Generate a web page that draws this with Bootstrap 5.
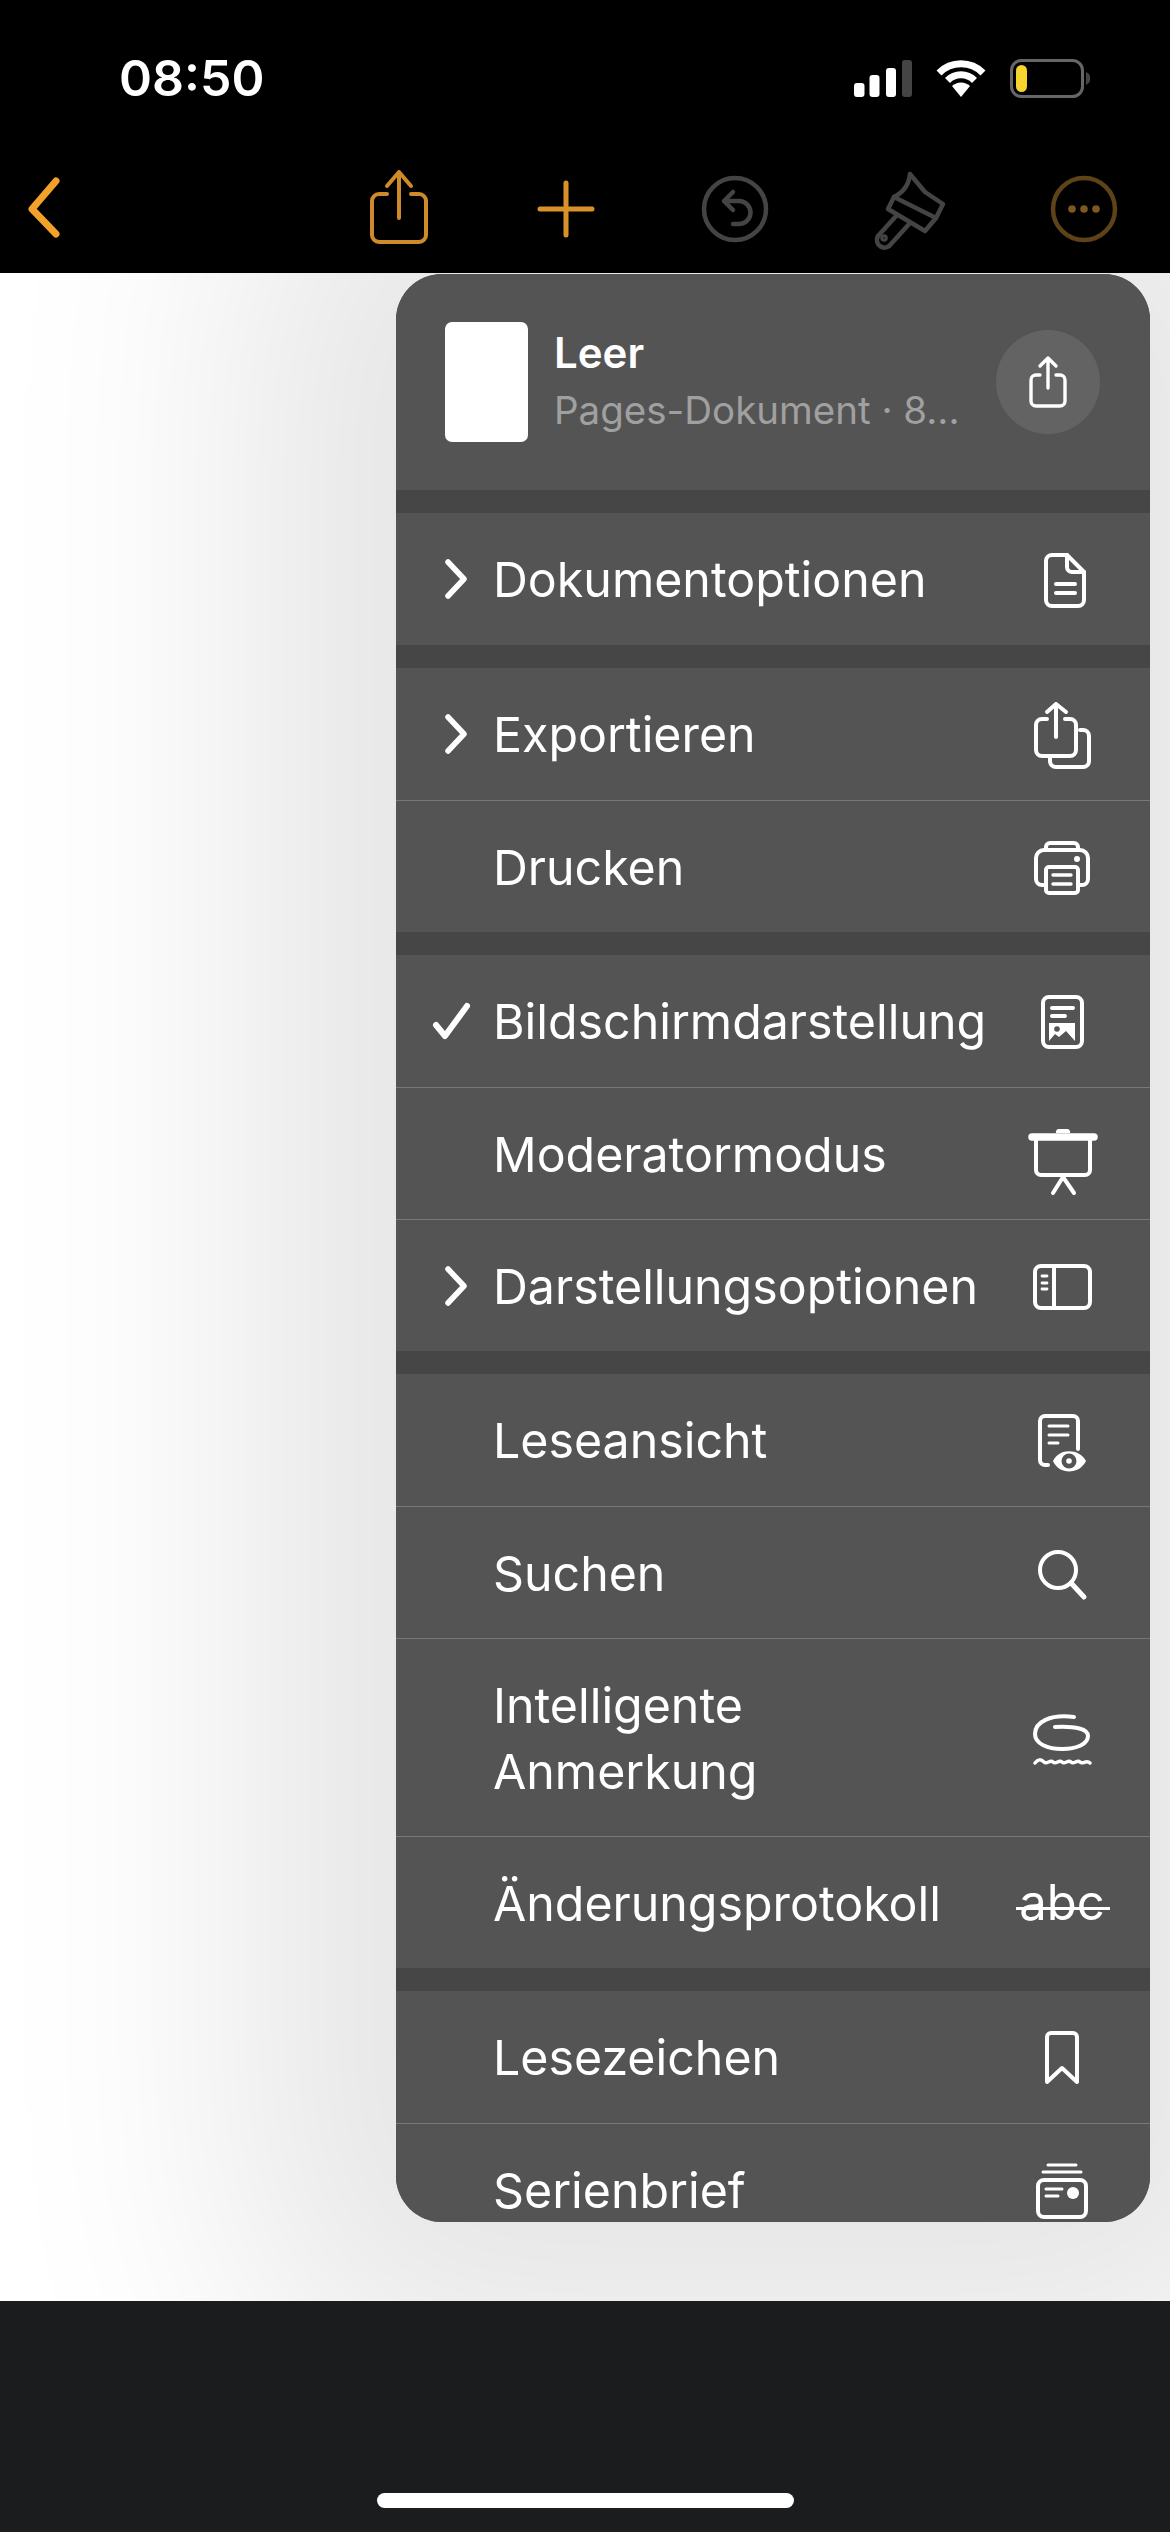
<!DOCTYPE html>
<html lang="de">
<head>
<meta charset="UTF-8" />
<title>Pages Menü</title>
<link href="https://cdn.jsdelivr.net/npm/bootstrap@5.3.0/dist/css/bootstrap.min.css" rel="stylesheet" />
<style>
  body { background: #000; font-family: Inter, "Liberation Sans", sans-serif; color: #fff; }
  .phone { width: 1170px; height: 2532px; overflow: hidden; }
  .status-bar { height: 144px; padding: 12px 80px 0 119px; }
  .clock { font-size: 50px; font-weight: 600; line-height: 1; }
  .tool-bar { height: 129px; padding-right: 36px; }
  .tool-slot { width: 100px; height: 100px; display: block; flex: none; }
  .tool-group { gap: 71px; }
  .canvas-area { height: 2028px; background: #fff; overflow: hidden; }
  .doc-menu { position: absolute; top: 1px; left: 396px; width: 754px; height: 1948px; background: #464646;
    border-radius: 46px; overflow: hidden; gap: 23px; box-shadow: 0 0 300px 150px rgba(0,0,0,.1); }
  .canvas-wrap { position: relative; overflow: hidden; }
  .menu-head { height: 216px; background: #545454; padding: 48px 50px 0 49px; flex: none; }
  .thumb { width: 83px; height: 120px; background: #fff; border-radius: 7px; flex: none; }
  .head-title { font-size: 42px; font-weight: 600; line-height: 50px; }
  .head-sub { font-size: 38.5px; line-height: 50px; color: #a0a0a0; margin-top: 7px; white-space: nowrap; }
  .head-text { margin-left: 26px; margin-top: 6px; }
  .share-round { width: 104px; height: 104px; border-radius: 50%; background: #636363; margin-top: 8px; flex: none; }
  .menu-group { background: #545454; flex: none; }
  .menu-row { height: 132px; border-top: 1px solid #787878; font-size: 48.300px; line-height: 66px; }
  .menu-row:first-child { border-top: 0; }
  .menu-row.tall-row { height: 198px; }
  .row-mark { width: 97px; flex: none; }
  .row-mark svg, .row-icon { display: block; }
  .row-label { flex: 1 1 auto; padding-top: 2px; }
  .row-icon { width: 96px; height: 96px; flex: none; margin-right: 40px; }
  .abc-icon { width: 96px; flex: none; margin-right: 40px; text-align: center; position: relative; font-size: 49px; line-height: 66px; }
  .abc-icon::after { content: ""; position: absolute; left: 2px; right: 0; top: 37px; height: 3px; background: #fff; }
  .home-area { height: 231px; background: #1b1c1d; }
  .home-line { width: 417px; height: 15px; border-radius: 8px; background: #fff; margin-top: 192px; }
  svg .ln { fill: none; stroke: #fff; stroke-width: 4; stroke-linecap: round; stroke-linejoin: round; }
  svg .ln-thin { fill: none; stroke: #fff; stroke-width: 3.4; stroke-linecap: round; stroke-linejoin: round; }
  svg .fl { fill: #fff; }
</style>
</head>
<body>
<div class="phone d-flex flex-column">

  <!-- Status bar -->
  <div class="status-bar d-flex align-items-center justify-content-between">
    <div class="clock">08:50</div>
    <div class="d-flex align-items-center">
      <svg width="58" height="37" viewBox="0 0 58 37">
        <rect x="0" y="23" width="10.5" height="14" rx="3" fill="#fff"/>
        <rect x="15.500" y="15" width="10" height="22" rx="3" fill="#fff"/>
        <rect x="32" y="8" width="10" height="29" rx="3" fill="#fff"/>
        <rect x="48" y="0" width="10" height="37" rx="3" fill="#444"/>
      </svg>
      <svg class="ms-4" width="50" height="37" viewBox="0 0 50 37">
        <path d="M3 13 A31 31 0 0 1 47 13" fill="none" stroke="#fff" stroke-width="7"/>
        <path d="M11.500 20.500 A19 19 0 0 1 38.500 20.500" fill="none" stroke="#fff" stroke-width="7"/>
        <path d="M25 37 L16 26 A13 13 0 0 1 34 26 Z" fill="#fff"/>
      </svg>
      <svg class="ms-4" width="80" height="39" viewBox="0 0 80 39">
        <rect x="1.500" y="1.500" width="71" height="36" rx="10" fill="none" stroke="#666" stroke-width="3"/>
        <rect x="6" y="6" width="11" height="27" rx="5.500" fill="#f6d32d"/>
        <path d="M76 13 a7 7 0 0 1 0 13 Z" fill="#444"/>
      </svg>
    </div>
  </div>

  <!-- Toolbar -->
  <div class="tool-bar d-flex align-items-center justify-content-between">
    <svg class="tool-slot" viewBox="0 0 100 100"><path d="M56 22 L32 50 L56 75" fill="none" stroke="#f2a22b" stroke-width="7" stroke-linecap="round" stroke-linejoin="round"/></svg>
    <div class="tool-group d-flex">
      <svg class="tool-slot" viewBox="0 0 100 100">
        <g fill="none" stroke="#cf8a2a" stroke-width="4" stroke-linecap="round" stroke-linejoin="round">
          <path d="M37 35 H29 a7 7 0 0 0 -7 7 V76 a7 7 0 0 0 7 7 H69 a7 7 0 0 0 7 -7 V42 a7 7 0 0 0 -7 -7 H61"/>
          <path d="M49 59 V13 M37 27 L49 13 L61 27"/>
        </g>
      </svg>
      <svg class="tool-slot" viewBox="0 0 100 100"><path d="M19 50 H71 M45 24 V76" stroke="#d9912a" stroke-width="5" stroke-linecap="round" fill="none"/></svg>
      <svg class="tool-slot" viewBox="0 0 100 100">
        <g fill="none" stroke="#444" stroke-width="4.500" stroke-linecap="round" stroke-linejoin="round">
          <circle cx="43" cy="50" r="31"/>
          <path d="M41 33 L32 42 L41 51 M32 42 H47 a11.500 11.500 0 0 1 0 23 H41"/>
        </g>
      </svg>
      <svg class="tool-slot" viewBox="0 0 100 100">
        <g fill="none" stroke="#444" stroke-width="4.500" stroke-linecap="round" stroke-linejoin="round">
          <path d="M47 15 L62 33 L80 45 L73 59 L31 38 C41 33 46 25 47 15 Z"/>
          <path d="M31 38 L25 50 L62 72 L73 59"/>
          <path d="M34 56 L15 77 a7.500 7.500 0 0 0 13 8 L47 64"/>
          <circle cx="21" cy="79" r="1.500"/>
        </g>
      </svg>
      <svg class="tool-slot" viewBox="0 0 100 100">
        <circle cx="50" cy="50" r="31" fill="none" stroke="#5e4218" stroke-width="4.500"/>
        <circle cx="38" cy="50" r="3.800" fill="#7d5820"/><circle cx="50" cy="50" r="3.800" fill="#7d5820"/><circle cx="62" cy="50" r="3.800" fill="#7d5820"/>
      </svg>
    </div>
  </div>

  <!-- Canvas with open menu -->
  <div class="canvas-wrap">
    <div class="canvas-area"></div>
    <div class="doc-menu d-flex flex-column">

      <div class="menu-head d-flex">
        <div class="thumb"></div>
        <div class="head-text flex-grow-1">
          <div class="head-title">Leer</div>
          <div class="head-sub">Pages-Dokument · 8...</div>
        </div>
        <div class="share-round d-flex align-items-center justify-content-center">
          <svg width="44" height="54" viewBox="0 0 44 54">
            <path class="ln-thin" d="M14 20 H10 a5 5 0 0 0 -5 5 V46 a5 5 0 0 0 5 5 H34 a5 5 0 0 0 5 -5 V25 a5 5 0 0 0 -5 -5 H30"/>
            <path class="ln-thin" d="M22 33 V3 M14 11 L22 3 L30 11"/>
          </svg>
        </div>
      </div>

      <div class="menu-group">
        <div class="menu-row d-flex align-items-center">
          <div class="row-mark"><svg width="99" height="40" viewBox="0 0 99 40"><path d="M52 3 L68 20 L52 37" fill="none" stroke="#fff" stroke-width="5.500" stroke-linecap="round" stroke-linejoin="round"/></svg></div>
          <div class="row-label">Dokumentoptionen</div>
          <svg class="row-icon" viewBox="0 -8 96 96">
            <path class="ln" d="M38 16 H53 L70 33 V61 a6 6 0 0 1 -6 6 H38 a6 6 0 0 1 -6 -6 V22 a6 6 0 0 1 6 -6 Z"/>
            <path class="ln" d="M53 16 V28 a5 5 0 0 0 5 5 H70 M42 45 H61 M42 54 H61"/>
          </svg>
        </div>
      </div>

      <div class="menu-group">
        <div class="menu-row d-flex align-items-center">
          <div class="row-mark"><svg width="99" height="40" viewBox="0 0 99 40"><path d="M52 3 L68 20 L52 37" fill="none" stroke="#fff" stroke-width="5.500" stroke-linecap="round" stroke-linejoin="round"/></svg></div>
          <div class="row-label">Exportieren</div>
          <svg class="row-icon" viewBox="0 -8 96 96">
            <path class="ln" d="M33 25 H28 a6 6 0 0 0 -6 6 V56 a6 6 0 0 0 6 6 H56 a6 6 0 0 0 6 -6 V31 a6 6 0 0 0 -6 -6 H51"/>
            <path class="ln" d="M66 36 H69 a6 6 0 0 1 6 6 V67 a6 6 0 0 1 -6 6 H42 a6 6 0 0 1 -6 -6 V63"/>
            <path class="ln" d="M42 43 V10 M33 18 L42 10 L52 18"/>
          </svg>
        </div>
        <div class="menu-row d-flex align-items-center">
          <div class="row-mark"></div>
          <div class="row-label">Drucken</div>
          <svg class="row-icon" viewBox="0 -8 96 96">
            <path class="ln" d="M31 58 H28 a6 6 0 0 1 -6 -6 V31 a8 8 0 0 1 8 -8 H66 a8 8 0 0 1 8 8 V52 a6 6 0 0 1 -6 6 H65"/>
            <path class="ln" d="M32 23 V20 a4 4 0 0 1 4 -4 H60 a4 4 0 0 1 4 4 V23"/>
            <rect class="ln" x="32" y="40" width="32" height="26" rx="3"/>
            <path class="ln-thin" d="M39 48 H57 M39 57 H57"/>
            <circle class="fl" cx="63" cy="32" r="3"/>
          </svg>
        </div>
      </div>

      <div class="menu-group">
        <div class="menu-row d-flex align-items-center">
          <div class="row-mark"><svg width="99" height="40" viewBox="0 0 99 40"><path d="M40 24 L49 35 L71 5" fill="none" stroke="#fff" stroke-width="6" stroke-linecap="round" stroke-linejoin="round"/></svg></div>
          <div class="row-label">Bildschirmdarstellung</div>
          <svg class="row-icon" viewBox="0 -8 96 96">
            <rect class="ln" x="29" y="16" width="39" height="50" rx="6"/>
            <path class="ln" d="M38 27 H59 M38 35 H51"/>
            <path class="fl" d="M35 42 H61 V60 L52 50 L45 56 L41 53 L35 60 Z"/>
            <circle cx="43" cy="48" r="2.800" fill="#545454"/>
          </svg>
        </div>
        <div class="menu-row d-flex align-items-center">
          <div class="row-mark"></div>
          <div class="row-label">Moderatormodus</div>
          <svg class="row-icon" viewBox="0 -8 96 96">
            <path d="M18 23 H80" stroke="#fff" stroke-width="7.500" stroke-linecap="round" fill="none"/>
            <path d="M42 19 a3 3 0 0 1 3 -4 H53 a3 3 0 0 1 3 4 Z" fill="#fff"/>
            <path class="ln" d="M22 25 V56 a5 5 0 0 0 5 5 H71 a5 5 0 0 0 5 -5 V25"/>
            <path class="ln" d="M49 63 L39 79 M49 63 L60 79"/>
          </svg>
        </div>
        <div class="menu-row d-flex align-items-center">
          <div class="row-mark"><svg width="99" height="40" viewBox="0 0 99 40"><path d="M52 3 L68 20 L52 37" fill="none" stroke="#fff" stroke-width="5.500" stroke-linecap="round" stroke-linejoin="round"/></svg></div>
          <div class="row-label">Darstellungsoptionen</div>
          <svg class="row-icon" viewBox="0 -8 96 96">
            <rect class="ln" x="21" y="20" width="55" height="42" rx="6"/>
            <path class="ln" d="M40 20 V62"/>
            <path d="M28 30 H33 M28 37 H33 M28 43 H33" stroke="#fff" stroke-width="2.800" stroke-linecap="round" fill="none"/>
          </svg>
        </div>
      </div>

      <div class="menu-group">
        <div class="menu-row d-flex align-items-center">
          <div class="row-mark"></div>
          <div class="row-label">Leseansicht</div>
          <svg class="row-icon" viewBox="0 -8 96 96">
            <path class="ln" d="M34 65 H31 a5 5 0 0 1 -5 -5 V21 a5 5 0 0 1 5 -5 H59 a5 5 0 0 1 5 5 V49"/>
            <path d="M35 26 H54 M35 35 H54 M35 43 H44" stroke="#fff" stroke-width="3" stroke-linecap="round" fill="none"/>
            <path class="fl" d="M39 61 C45 48 65 48 72 61 C65 75 45 75 39 61 Z"/>
            <circle cx="55" cy="61" r="7.500" fill="#545454"/>
            <circle class="fl" cx="55" cy="61" r="2.800"/>
          </svg>
        </div>
        <div class="menu-row d-flex align-items-center">
          <div class="row-mark"></div>
          <div class="row-label">Suchen</div>
          <svg class="row-icon" viewBox="0 -8 96 96">
            <circle class="ln" cx="44" cy="37" r="18"/>
            <path d="M57 50 L70 64" stroke="#fff" stroke-width="5" stroke-linecap="round" fill="none"/>
          </svg>
        </div>
        <div class="menu-row tall-row d-flex align-items-center">
          <div class="row-mark"></div>
          <div class="row-label">Intelligente<br>Anmerkung</div>
          <svg class="row-icon" viewBox="0 -8 96 96">
            <path class="ln" d="M60 19 C36 16 21 24 21 36 C21 46 34 51 48 51 C63 51 74 46 74 38 C74 31 62 28 41 29"/>
            <path d="M21 65 C24 61 27 61 30 64 C33 67 36 61 39 64 C42 67 45 61 48 64 C51 67 54 61 57 64 C60 67 63 61 66 64 C69 67 72 61 76 65" fill="none" stroke="#fff" stroke-width="3.500" stroke-linecap="round"/>
          </svg>
        </div>
        <div class="menu-row d-flex align-items-center">
          <div class="row-mark"></div>
          <div class="row-label">Änderungsprotokoll</div>
          <div class="abc-icon">abc</div>
        </div>
      </div>

      <div class="menu-group">
        <div class="menu-row d-flex align-items-center">
          <div class="row-mark"></div>
          <div class="row-label">Lesezeichen</div>
          <svg class="row-icon" viewBox="0 -8 96 96">
            <path class="ln" d="M33 65 V20 a4 4 0 0 1 4 -4 H59 a4 4 0 0 1 4 4 V65 L48 51 Z"/>
          </svg>
        </div>
        <div class="menu-row d-flex align-items-center">
          <div class="row-mark"></div>
          <div class="row-label">Serienbrief</div>
          <svg class="row-icon" viewBox="0 -8 96 96">
            <rect class="ln" x="24" y="30" width="48" height="37" rx="6"/>
            <path d="M29 22 H67 M34 15 H62" stroke="#fff" stroke-width="3" stroke-linecap="round" fill="none"/>
            <path d="M32 39 H48 M32 46 H44" stroke="#fff" stroke-width="3" stroke-linecap="round" fill="none"/>
            <circle class="fl" cx="59" cy="43" r="6"/>
          </svg>
        </div>
      </div>

    </div>
  </div>

  <!-- Home indicator -->
  <div class="home-area d-flex justify-content-center">
    <div class="home-line"></div>
  </div>
</div>
<script src="https://cdn.jsdelivr.net/npm/bootstrap@5.3.0/dist/js/bootstrap.bundle.min.js"></script>
</body>
</html>
